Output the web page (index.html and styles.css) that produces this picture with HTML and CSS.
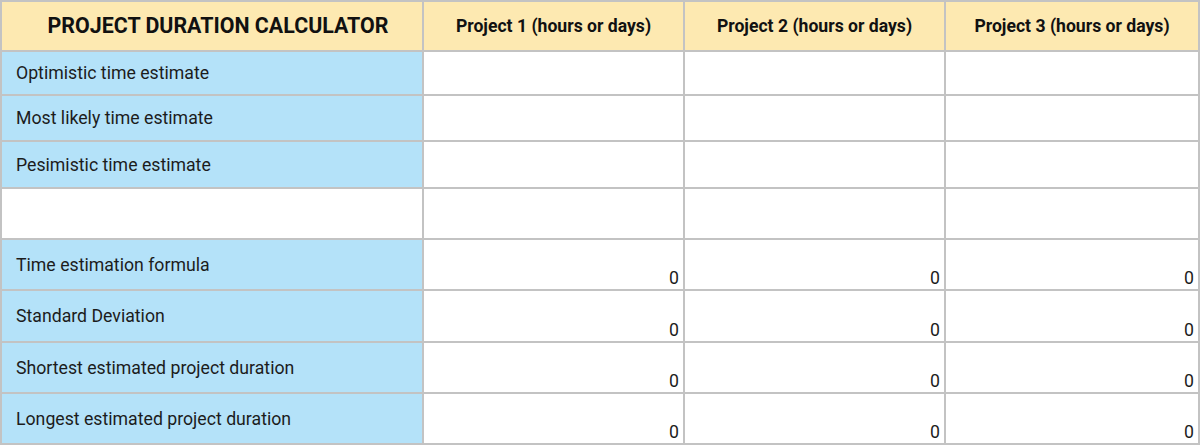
FILE: index.html
```html
<!DOCTYPE html>
<html>
<head>
<meta charset="utf-8">
<link rel="stylesheet" href="styles.css">
</head>
<body>
<table class="calc">
  <colgroup>
    <col class="c-label">
    <col class="c-proj">
    <col class="c-proj">
    <col class="c-proj3">
  </colgroup>
  <tr class="r-head">
    <th class="title">PROJECT DURATION CALCULATOR</th>
    <th class="proj">Project 1 (hours or days)</th>
    <th class="proj">Project 2 (hours or days)</th>
    <th class="proj">Project 3 (hours or days)</th>
  </tr>
  <tr class="r-a"><td class="label">Optimistic time estimate</td><td></td><td></td><td></td></tr>
  <tr class="r-b"><td class="label">Most likely time estimate</td><td></td><td></td><td></td></tr>
  <tr class="r-c"><td class="label">Pesimistic time estimate</td><td></td><td></td><td></td></tr>
  <tr class="r-blank"><td></td><td></td><td></td><td></td></tr>
  <tr class="r-d"><td class="label">Time estimation formula</td><td class="num">0</td><td class="num">0</td><td class="num">0</td></tr>
  <tr class="r-e"><td class="label">Standard Deviation</td><td class="num">0</td><td class="num">0</td><td class="num">0</td></tr>
  <tr class="r-f"><td class="label">Shortest estimated project duration</td><td class="num">0</td><td class="num">0</td><td class="num">0</td></tr>
  <tr class="r-d"><td class="label">Longest estimated project duration</td><td class="num">0</td><td class="num">0</td><td class="num">0</td></tr>
</table>
</body>
</html>
```
FILE: styles.css
```css
html, body {
  margin: 0;
  padding: 0;
  background: #ffffff;
}
body {
  font-family: Roboto, "Liberation Sans", Arial, sans-serif;
  color: #1c1c1c;
}
.calc {
  border-collapse: collapse;
  table-layout: fixed;
  width: 1200px;
  margin: 0;
}
.c-label { width: 422px; }
.c-proj { width: 261px; }
.c-proj3 { width: 254px; }
.calc th, .calc td {
  border: 2px solid #c3c3c3;
  padding: 0;
  line-height: 20px;
}
.r-head th {
  background: #fde9b1;
  height: 48px;
  font-weight: 700;
  color: #111;
}
.title {
  font-size: 21.4px;
  text-align: center;
  padding-left: 12px !important;
}
.proj {
  font-size: 17.6px;
  text-align: center;
}
.label {
  background: #b4e2f9;
  font-size: 17.7px;
  padding-left: 14px !important;
  text-align: left;
  vertical-align: middle;
}
.num {
  text-align: right;
  vertical-align: bottom;
  font-size: 17.7px;
  padding: 0 4px 1px 0 !important;
}
.r-a td { height: 42px; }
.r-b td { height: 44px; }
.r-c td { height: 45px; }
.r-blank td { height: 49px; }
.r-d td { height: 48px; }
.r-e td { height: 49px; }
.r-f td { height: 48px; }
.r-d td.label, .r-f td.label { height: 49px; }
.r-e td.label { height: 50px; }
```
